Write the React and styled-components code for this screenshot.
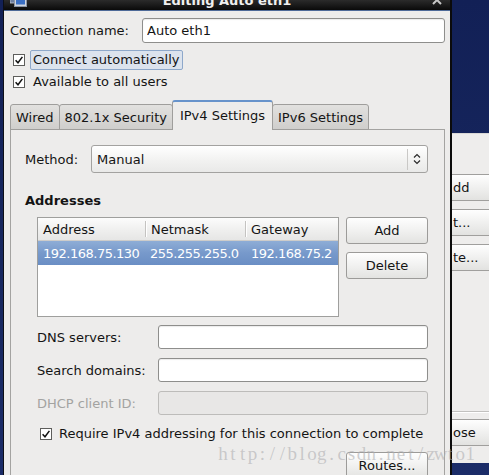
import React from 'react';
import styled, { createGlobalStyle } from 'styled-components';

const Global = createGlobalStyle`
  html, body { margin: 0; padding: 0; }
  body {
    width: 489px; height: 475px; overflow: hidden;
    font-family: "DejaVu Sans", Verdana, sans-serif;
    font-size: 13px; color: #141414;
    background: #15235b;
  }
  #root { width: 489px; height: 475px; }
`;

const Screen = styled.div`
  position: relative;
  display: flex;
  width: 489px;
  height: 475px;
  overflow: hidden;
  background: linear-gradient(180deg, #122056 0%, #17275f 55%, #1b2c68 100%);
`;

const DesktopEdge = styled.div`
  width: 3px;
  flex: none;
`;

const Dialog = styled.div`
  width: 449px;
  flex: none;
  display: flex;
  flex-direction: column;
  box-sizing: border-box;
  border-left: 1px solid #0d0f16;
  border-right: 2px solid #0b0b0b;
  background: #edeceb;
  overflow: hidden;
`;

const TitleBar = styled.div`
  height: 10px;
  flex: none;
  display: grid;
  grid-template-columns: 1fr auto 1fr;
  overflow: hidden;
  background: linear-gradient(180deg, #2b2b2b 0%, #0a0a0a 100%);
  border-bottom: 1px solid #4e6a98;
`;

const TitleIcon = styled.svg`
  margin: -7px 0 0 6px;
  display: block;
`;

const TitleText = styled.div`
  margin-top: -7px;
  line-height: 15px;
  font-weight: bold;
  color: #f0f0f0;
  white-space: nowrap;
`;

const CloseGlyph = styled.svg`
  justify-self: end;
  display: block;
  margin: -5px 8px 0 0;
`;

const Content = styled.div`
  flex: 1;
  display: flex;
  flex-direction: column;
  padding: 7px 5px 0 6px;
  min-height: 0;
`;

const NameRow = styled.div`
  display: grid;
  grid-template-columns: 132px 1fr;
  align-items: center;
`;

const TextField = styled.input`
  box-sizing: border-box;
  width: 100%;
  height: ${p => p.$h || 24}px;
  margin: 0;
  padding: 0 4px;
  border: 1px solid ${p => (p.disabled ? '#bdbcba' : '#8e8e8c')};
  border-radius: 3px;
  background: ${p => (p.disabled ? '#e8e7e6' : '#ffffff')};
  box-shadow: ${p => (p.disabled ? 'none' : 'inset 0 1px 1px rgba(0,0,0,0.08)')};
  font: inherit;
  color: #141414;
  outline: none;
`;

const CheckRow = styled.div`
  display: flex;
  align-items: center;
  height: 20px;
  margin-top: ${p => p.$top || 0}px;
  margin-left: ${p => p.$indent || 0}px;
`;

const BoxSvg = styled.svg`
  display: block;
  flex: none;
  margin-left: 3px;
`;

const CheckLabel = styled.span`
  box-sizing: border-box;
  height: 20px;
  line-height: 18px;
  margin-left: ${p => p.$gap}px;
  padding: 0 2px;
  border: 1px solid ${p => (p.$focus ? '#8ea8ca' : 'transparent')};
  border-radius: 2px;
  background: ${p => (p.$focus ? '#dce3ed' : 'transparent')};
  white-space: nowrap;
`;

const TabStrip = styled.div`
  display: flex;
  align-items: flex-end;
  height: 30px;
  margin-top: 8px;
  margin-bottom: -1px;
  position: relative;
  z-index: 1;
`;

const Tab = styled.div`
  box-sizing: border-box;
  height: ${p => (p.$active ? 30 : 26)}px;
  display: flex;
  align-items: center;
  padding: ${p => (p.$active ? '0 7px 1px' : '0 5px')};
  margin-left: ${p => (p.$first ? 0 : -1)}px;
  border: 1px solid #9f9e9c;
  border-top: ${p => (p.$active ? '2px solid #6793cb' : '1px solid #9f9e9c')};
  border-bottom: ${p => (p.$active ? 'none' : '1px solid #9f9e9c')};
  border-radius: 3px 3px 0 0;
  background: ${p => (p.$active ? '#edeceb' : 'linear-gradient(180deg, #e2e1df 0%, #cfcecc 100%)')};
  white-space: nowrap;
  position: relative;
  z-index: ${p => (p.$active ? 2 : 1)};
`;

const Panel = styled.div`
  flex: 1;
  display: flex;
  flex-direction: column;
  border: 1px solid #a4a3a1;
  border-bottom: none;
  background: #edeceb;
  padding: 15px 16px 0 14px;
`;

const MethodRow = styled.div`
  display: grid;
  grid-template-columns: 66px 1fr;
  align-items: center;
`;

const Combo = styled.div`
  box-sizing: border-box;
  height: 28px;
  display: flex;
  align-items: center;
  border: 1px solid #a3a2a0;
  border-radius: 3px;
  background: linear-gradient(180deg, #ffffff 0%, #f3f3f2 50%, #e9e9e8 100%);
  padding-left: 5px;
`;

const ComboText = styled.span`
  flex: 1;
`;

const ComboSep = styled.span`
  width: 1px;
  height: 21px;
  background: #c9c8c6;
`;

const ComboArrow = styled.svg`
  display: block;
  margin: 0 6px 0 5px;
`;

const SectionTitle = styled.div`
  margin-top: 20px;
  line-height: 16px;
  font-weight: bold;
`;

const AddrRow = styled.div`
  display: flex;
  gap: 7px;
  margin: 8px 0 0 12px;
`;

const Table = styled.div`
  box-sizing: border-box;
  width: 302px;
  height: 100px;
  border: 1px solid #9f9f9d;
  background: #ffffff;
`;

const HeadRow = styled.div`
  display: grid;
  grid-template-columns: 107px 100px 1fr;
  height: 23px;
  background: linear-gradient(180deg, #fcfcfc 0%, #eeeeed 60%, #e6e6e5 100%);
  border-bottom: 1px solid #cdccca;
  box-sizing: border-box;
`;

const HeadCell = styled.div`
  position: relative;
  display: flex;
  align-items: center;
  padding-left: ${p => p.$pad}px;
  &::before {
    content: '';
    display: ${p => (p.$sep ? 'block' : 'none')};
    position: absolute;
    left: 0;
    top: 3px;
    bottom: 3px;
    width: 1px;
    background: #c4c3c1;
    box-shadow: 1px 0 0 #ffffff;
  }
`;

const DataRow = styled.div`
  display: grid;
  grid-template-columns: 107px 100px 1fr;
  height: 24px;
  color: #ffffff;
  letter-spacing: -0.5px;
  background: linear-gradient(180deg, #8eadd6 0%, #7799cb 50%, #6a8ec4 100%);
`;

const DataCell = styled.div`
  display: flex;
  align-items: center;
  padding-left: ${p => p.$pad}px;
  white-space: nowrap;
  overflow: hidden;
`;

const ButtonCol = styled.div`
  display: flex;
  flex-direction: column;
  gap: 8px;
`;

const Button = styled.button`
  box-sizing: border-box;
  width: 82px;
  height: 27px;
  margin: 0;
  padding: 0;
  border: 1px solid #9c9b99;
  border-radius: 3px;
  background: linear-gradient(180deg, #fefefe 0%, #f1f1f0 50%, #e3e3e1 100%);
  font: inherit;
  color: #141414;
`;

const FieldRow = styled.div`
  display: grid;
  grid-template-columns: 121px 1fr;
  align-items: center;
  margin: ${p => p.$top}px 0 0 12px;
  color: ${p => (p.$dim ? '#a3a3a1' : 'inherit')};
`;

const RoutesRow = styled.div`
  display: flex;
  justify-content: flex-end;
  margin-top: 8px;
`;

const BgArea = styled.div`
  flex: 1;
  display: flex;
  flex-direction: column;
  min-width: 0;
`;

const NavyBlock = styled.div`
  height: ${p => p.$h}px;
  flex: ${p => (p.$grow ? 1 : 'none')};
`;

const BgWindow = styled.div`
  height: 330px;
  flex: none;
  display: flex;
  flex-direction: column;
  background: #eeedec;
  overflow: hidden;
  border-top: 1px solid #d9d8d6;
  box-sizing: border-box;
`;

const BgButtons = styled.div`
  display: flex;
  flex-direction: column;
  gap: 8px;
  margin-top: 40px;
`;

const BgButton = styled.div`
  box-sizing: border-box;
  height: 27px;
  width: 60px;
  margin-left: -3px;
  padding-left: 3px;
  display: flex;
  align-items: center;
  border: 1px solid #a09f9d;
  border-radius: 3px;
  background: linear-gradient(180deg, #fefefe 0%, #f0f0ef 50%, #e2e2e0 100%);
  white-space: nowrap;
`;

const BgSeparator = styled.div`
  margin-top: 140px;
  height: 1px;
  background: #c2c1bf;
  box-shadow: 0 1px 0 #ffffff;
`;

const BgClose = styled(BgButton)`
  margin-top: 7px;
`;

const Watermark = styled.div`
  position: absolute;
  left: 218px;
  top: 444px;
  display: flex;
  font-family: "Liberation Serif", "DejaVu Serif", serif;
  font-size: 19px;
  line-height: 20px;
  color: rgba(175, 175, 178, 0.6);
  white-space: nowrap;
  pointer-events: none;
`;

const WaterChar = styled.span`
  width: 9.9px;
  display: flex;
  justify-content: center;
`;

const WATERMARK = 'http://blog.csdn.net/zwto1';

function CheckBox() {
  return (
    <BoxSvg width="12" height="12" viewBox="0 0 12 12">
      <rect x="0.5" y="0.5" width="11" height="11" fill="#ffffff" stroke="#5e5e5c" />
      <path d="M2.6 6.2 L5 8.8 L9.4 2.9" fill="none" stroke="#111" strokeWidth="1.5" />
    </BoxSvg>
  );
}

export default function App() {
  return (
    <Screen>
      <Global />
      <DesktopEdge />
      <Dialog>
        <TitleBar>
          <TitleIcon width="18" height="16" viewBox="0 0 18 16">
            <rect x="0" y="4" width="6" height="6" fill="#6d7fa0" stroke="#c9ced8" strokeWidth="0.8" />
            <rect x="4.5" y="0.5" width="12" height="13" fill="#cfd5df" stroke="#8d96a6" />
            <rect x="6" y="2" width="9" height="9.5" fill="#3a6fc4" />
          </TitleIcon>
          <TitleText>Editing Auto eth1</TitleText>
          <CloseGlyph width="10" height="10" viewBox="0 0 10 10">
            <path d="M1 1 L9 9 M9 1 L1 9" stroke="#c8c8c8" strokeWidth="2" />
          </CloseGlyph>
        </TitleBar>
        <Content>
          <NameRow>
            <span>Connection name:</span>
            <TextField $h={25} readOnly defaultValue="Auto eth1" />
          </NameRow>
          <CheckRow $top={7}>
            <CheckBox />
            <CheckLabel $gap={5} $focus>Connect automatically</CheckLabel>
          </CheckRow>
          <CheckRow $top={2}>
            <CheckBox />
            <CheckLabel $gap={5}>Available to all users</CheckLabel>
          </CheckRow>
          <TabStrip>
            <Tab $first>Wired</Tab>
            <Tab>802.1x Security</Tab>
            <Tab $active>IPv4 Settings</Tab>
            <Tab>IPv6 Settings</Tab>
          </TabStrip>
          <Panel>
            <MethodRow>
              <span>Method:</span>
              <Combo>
                <ComboText>Manual</ComboText>
                <ComboSep />
                <ComboArrow width="8" height="14" viewBox="0 0 8 14">
                  <path d="M1 5.5 L4 2.5 L7 5.5 M1 8.5 L4 11.5 L7 8.5" fill="none" stroke="#2a2a2a" strokeWidth="1.2" />
                </ComboArrow>
              </Combo>
            </MethodRow>
            <SectionTitle>Addresses</SectionTitle>
            <AddrRow>
              <Table>
                <HeadRow>
                  <HeadCell $pad={5}>Address</HeadCell>
                  <HeadCell $pad={6} $sep>Netmask</HeadCell>
                  <HeadCell $pad={6} $sep>Gateway</HeadCell>
                </HeadRow>
                <DataRow>
                  <DataCell $pad={5}>192.168.75.130</DataCell>
                  <DataCell $pad={5}>255.255.255.0</DataCell>
                  <DataCell $pad={6}>192.168.75.2</DataCell>
                </DataRow>
              </Table>
              <ButtonCol>
                <Button>Add</Button>
                <Button>Delete</Button>
              </ButtonCol>
            </AddrRow>
            <FieldRow $top={8}>
              <span>DNS servers:</span>
              <TextField readOnly defaultValue="" />
            </FieldRow>
            <FieldRow $top={9}>
              <span>Search domains:</span>
              <TextField readOnly defaultValue="" />
            </FieldRow>
            <FieldRow $top={9} $dim>
              <span>DHCP client ID:</span>
              <TextField disabled defaultValue="" />
            </FieldRow>
            <CheckRow $top={9} $indent={12}>
              <CheckBox />
              <CheckLabel $gap={4}>Require IPv4 addressing for this connection to complete</CheckLabel>
            </CheckRow>
            <RoutesRow>
              <Button>Routes...</Button>
            </RoutesRow>
          </Panel>
        </Content>
      </Dialog>
      <BgArea>
        <NavyBlock $h={133} />
        <BgWindow>
          <BgButtons>
            <BgButton>dd</BgButton>
            <BgButton>t...</BgButton>
            <BgButton>te...</BgButton>
          </BgButtons>
          <BgSeparator />
          <BgClose>ose</BgClose>
        </BgWindow>
        <NavyBlock $grow />
      </BgArea>
      <Watermark aria-label={WATERMARK}>
        {WATERMARK.split('').map((c, i) => (
          <WaterChar key={i}>{c}</WaterChar>
        ))}
      </Watermark>
    </Screen>
  );
}
